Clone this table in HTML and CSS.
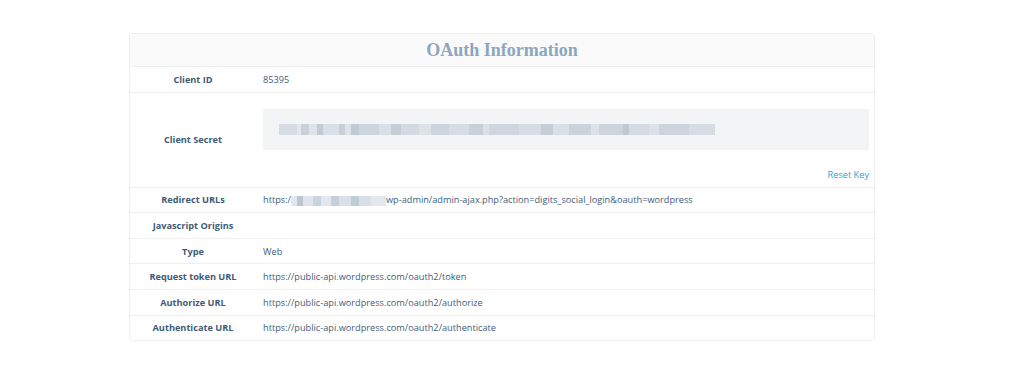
FILE: index.html
```html
<!DOCTYPE html>
<html>
<head>
<meta charset="utf-8">
<link rel="stylesheet" href="styles.css">
</head>
<body>
<div class="page">
  <div class="card">
    <div class="card-title">OAuth Information</div>
    <div class="row">
      <div class="label">Client ID</div>
      <div class="value">85395</div>
    </div>
    <div class="row row-secret">
      <div class="label">Client Secret</div>
      <div class="value secret-cell">
        <div class="secret-box">
          <span class="blur blur-long"></span>
        </div>
        <a class="reset" href="#">Reset Key</a>
      </div>
    </div>
    <div class="row">
      <div class="label">Redirect URLs</div>
      <div class="value">https:/<span class="blur blur-short"></span>wp-admin/admin-ajax.php?action=digits_social_login&amp;oauth=wordpress</div>
    </div>
    <div class="row">
      <div class="label">Javascript Origins</div>
      <div class="value"></div>
    </div>
    <div class="row">
      <div class="label">Type</div>
      <div class="value">Web</div>
    </div>
    <div class="row">
      <div class="label">Request token URL</div>
      <div class="value">https://public-api.wordpress.com/oauth2/token</div>
    </div>
    <div class="row">
      <div class="label">Authorize URL</div>
      <div class="value">https://public-api.wordpress.com/oauth2/authorize</div>
    </div>
    <div class="row row-last">
      <div class="label">Authenticate URL</div>
      <div class="value">https://public-api.wordpress.com/oauth2/authenticate</div>
    </div>
  </div>
</div>
</body>
</html>
```

FILE: styles.css
```css
html, body {
  margin: 0;
  padding: 0;
  background: #ffffff;
}

.page {
  padding: 33px 0 0 129px;
}

.card {
  width: 744px;
  border: 1px solid #efefef;
  border-radius: 3px;
  font-family: "Open Sans", sans-serif;
  font-size: 9.2px;
  color: #3e5a76;
}

.card-title {
  height: 32px;
  line-height: 32px;
  text-align: center;
  background: #fafafa;
  border-bottom: 1px solid #efefef;
  font-family: "Liberation Serif", serif;
  font-weight: bold;
  font-size: 18px;
  color: #8ba7bf;
}

.row {
  display: flex;
  align-items: center;
  height: 24.6px;
  border-bottom: 1px solid #efefef;
}

.row-last {
  border-bottom: none;
}

.label {
  width: 126px;
  flex: none;
  text-align: center;
  font-weight: 700;
  color: #3f5b77;
}

.value {
  flex: 1;
  padding-left: 7px;
  color: #3f5c7a;
  white-space: nowrap;
}

.row-secret {
  height: 94px;
}

.secret-cell {
  display: flex;
  flex-direction: column;
  padding-right: 5px;
  align-self: stretch;
  padding-top: 16px;
}

.secret-box {
  height: 41px;
  background: #f3f4f6;
  display: flex;
  align-items: center;
  padding-left: 16px;
}

.reset {
  align-self: flex-end;
  margin-top: 18px;
  color: #2ea3cf;
  text-decoration: none;
}

.blur {
  display: inline-block;
  vertical-align: middle;
}

.blur-long {
  width: 436px;
  height: 11px;
  background:
    linear-gradient(90deg,
      #d6dce4 0 18px, #e4e8ed 18px 22px, #c9d1db 22px 30px, #dfe4ea 30px 38px,
      #c2ccd7 38px 44px, #d9dfe6 44px 60px, #c6cfd9 60px 66px, #dfe4ea 66px 72px,
      #c0cad5 72px 80px, #cdd5de 80px 100px, #d9dfe6 100px 112px, #c5ced8 112px 122px,
      #d3dae2 122px 140px, #dde2e8 140px 152px, #ccd4dd 152px 170px, #d6dce4 170px 190px,
      #c8d0da 190px 204px, #dce1e7 204px 210px, #cfd6df 210px 240px, #d6dce4 240px 262px,
      #c4cdd8 262px 274px, #d9dfe6 274px 290px, #cad2dc 290px 312px, #dde2e8 312px 320px,
      #ccd4dd 320px 344px, #bfc9d4 344px 350px, #d4dbe3 350px 370px, #dce1e7 370px 380px,
      #cdd4dd 380px 410px, #d6dce4 410px 436px);
}

.blur-short {
  width: 95px;
  height: 10px;
  background:
    linear-gradient(90deg,
      #e3e8ee 0 6px, #bcc6d1 6px 12px, #dfe5eb 12px 22px, #cbd4de 22px 30px,
      #e3e8ee 30px 40px, #c6d0da 40px 48px, #dae0e7 48px 60px, #c2ccd7 60px 68px,
      #d9dfe6 68px 80px, #e3e8ee 80px 95px);
}
```
